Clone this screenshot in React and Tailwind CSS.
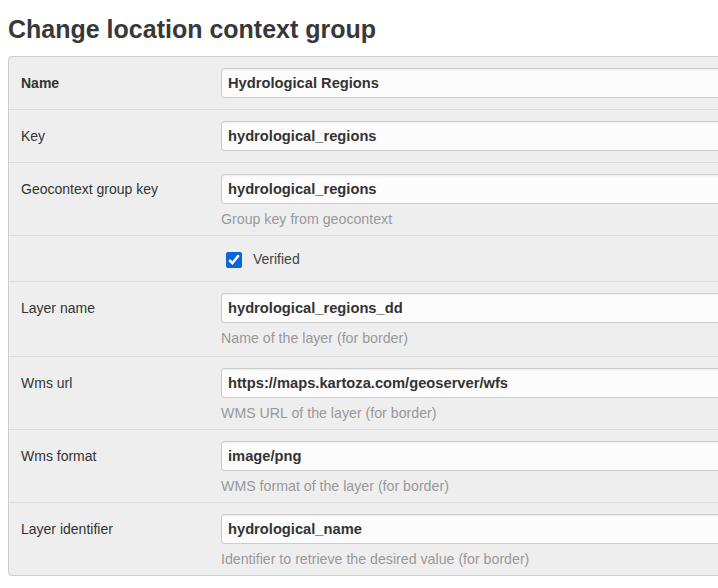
import React from 'react';

const rows = [
  { label: 'Name', value: 'Hydrological Regions', bold: true },
  { label: 'Key', value: 'hydrological_regions' },
  { label: 'Geocontext group key', value: 'hydrological_regions', help: 'Group key from geocontext' },
  { checkbox: 'Verified' },
  { label: 'Layer name', value: 'hydrological_regions_dd', help: 'Name of the layer (for border)', tall: true },
  { label: 'Wms url', value: 'https://maps.kartoza.com/geoserver/wfs', help: 'WMS URL of the layer (for border)' },
  { label: 'Wms format', value: 'image/png', help: 'WMS format of the layer (for border)' },
  { label: 'Layer identifier', value: 'hydrological_name', help: 'Identifier to retrieve the desired value (for border)' },
];

const FormRow = ({ row, first }) => {
  if (row.checkbox) {
    return (
      <div className="flex border-t border-[#dcdcdc] pt-[15px] pb-[13px]">
        <div className="w-[212px] shrink-0" />
        <label className="flex items-center gap-[11px] pl-[5px] h-[17px] text-[14px] leading-[17px] text-[#444]">
          <input type="checkbox" defaultChecked className="w-[16px] h-[16px] m-0 accent-[#0b65d8]" />
          {row.checkbox}
        </label>
      </div>
    );
  }

  const pb = row.help ? (row.tall ? 'pb-[9px]' : 'pb-[7px]') : 'pb-[11px]';

  return (
    <div className={`flex pt-[11px] ${pb} ${first ? '' : 'border-t border-[#dcdcdc]'}`}>
      <div
        className={`w-[212px] shrink-0 pl-[12px] text-[14px] leading-[30px] text-[#333] ${row.bold ? 'font-bold' : ''}`}
      >
        {row.label}
      </div>
      <div className="flex-1 min-w-0">
        <div className="h-[30px] border border-[#ccc] rounded-[3px] bg-[#fcfcfc] shadow-[inset_0_1px_2px_rgba(0,0,0,0.06)] pl-[6px] text-[14.7px] font-bold leading-[28px] text-[#333] whitespace-nowrap overflow-hidden">
          {row.value}
        </div>
        {row.help && (
          <div className="mt-[7px] text-[14.2px] leading-[17px] text-[#999] whitespace-nowrap">{row.help}</div>
        )}
      </div>
    </div>
  );
};

export default function App() {
  return (
    <div className="w-[718px] h-[588px] overflow-hidden bg-white font-['Liberation_Sans',Arial,sans-serif]">
      <h1 className="pl-[8px] pt-[14px] text-[25px] leading-[30px] font-bold text-[#383838]">
        Change location context group
      </h1>
      <div className="ml-[8px] mt-[12px] w-[760px] border border-[#ccc] rounded-[4px] bg-[#eeeeee]">
        {rows.map((row, i) => (
          <FormRow key={i} row={row} first={i === 0} />
        ))}
      </div>
    </div>
  );
}
